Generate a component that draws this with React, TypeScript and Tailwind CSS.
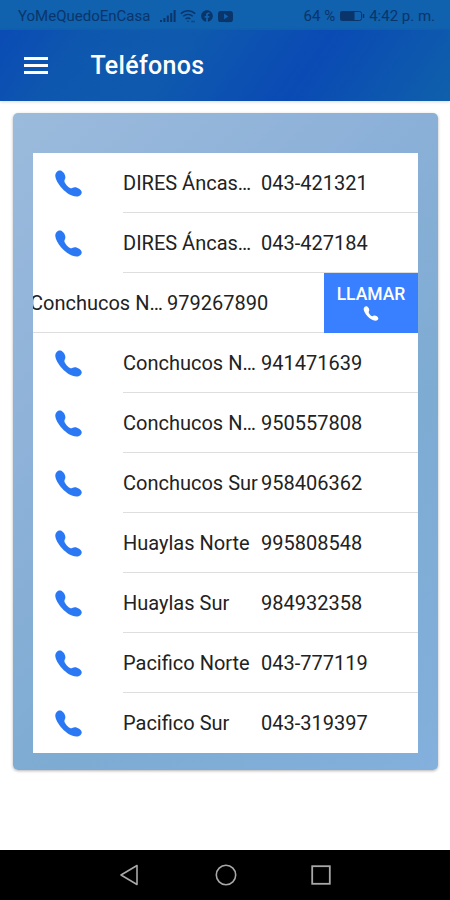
import { FaFacebook } from "react-icons/fa";
import { IoLogoYoutube } from "react-icons/io5";

type Contact = { name: string; phone: string; open?: boolean };

// Long names are already shortened to fit the name column
const contacts: Contact[] = [
    { name: "DIRES Áncas…", phone: "043-421321" },
    { name: "DIRES Áncas…", phone: "043-427184" },
    { name: "Conchucos N…", phone: "979267890", open: true },
    { name: "Conchucos N…", phone: "941471639" },
    { name: "Conchucos N…", phone: "950557808" },
    { name: "Conchucos Sur", phone: "958406362" },
    { name: "Huaylas Norte", phone: "995808548" },
    { name: "Huaylas Sur", phone: "984932358" },
    { name: "Pacifico Norte", phone: "043-777119" },
    { name: "Pacifico Sur", phone: "043-319397" },
];

function CallIcon({ className }: { className: string }) {
    return (
        <svg viewBox="0 0 27 27" className={className} fill="currentColor">
            <path d="M5.5.5C2.5 0 .2 2.8.3 6 .7 12.5 11.5 26.2 21.5 26.6c3 0 5.4-2.1 5.2-4.6-.2-2.2-4.7-4.9-6.9-4.7-1.8.2-3 1.3-4.3 1-2.2-.6-5.7-4.7-6.1-6.7-.3-1.4 1-2.4 1-4.3C10.400 4.500 8 1 5.500.5Z" />
        </svg>
    );
}

function StatusBar() {
    return (
        <div className="flex h-[30px] items-center justify-between bg-[#1061ae] pt-0.5 pr-[15px] pl-[18px] text-[15px] text-[#0a356a]">
            <div className="flex items-center">
                <span className="w-[133px] whitespace-nowrap">YoMeQuedoEnCasa</span>
                {/* Signal */}
                <svg viewBox="0 0 16 14" className="ml-[9px] h-3.5 w-4" fill="currentColor">
                    <rect x="0" y="11" width="2" height="2" />
                    <rect x="3.4" y="9" width="2" height="4" />
                    <rect x="6.8" y="6.5" width="2" height="6.5" />
                    <rect x="10.2" y="4" width="2" height="9" />
                    <rect x="13.6" y="1" width="2" height="12" />
                </svg>
                {/* Wifi */}
                <svg viewBox="0 0 16 14" className="ml-1 h-3.5 w-4" fill="none" stroke="currentColor" strokeWidth="1.5">
                    <path d="M0.8 4.6C5 0.8 11 0.8 15.2 4.6M3.2 7.3C6 4.9 10 4.9 12.8 7.3M5.6 10C7 8.8 9 8.8 10.4 10" />
                    <circle cx="8" cy="12.2" r="0.8" fill="currentColor" stroke="none" />
                    <path d="M11.5 12.5h3" strokeDasharray="1.2 0.8" />
                </svg>
                <FaFacebook className="ml-[5px] h-3 w-3" />
                <IoLogoYoutube className="ml-[5px] h-[15px] w-[15px]" />
            </div>
            <div className="flex items-center">
                <span className="whitespace-nowrap">64 %</span>
                {/* Battery */}
                <svg viewBox="0 0 25 12" className="mr-1 ml-[5px] h-3 w-[25px]" fill="none" stroke="currentColor">
                    <rect x="0.5" y="1.5" width="21" height="9" rx="2" />
                    <rect x="1" y="2" width="13" height="8" fill="currentColor" />
                    <path d="M23.5 4v4" strokeWidth="1.5" />
                </svg>
                <span className="whitespace-nowrap">4:42 p. m.</span>
            </div>
        </div>
    );
}

function Row({ contact, last }: { contact: Contact; last: boolean }) {
    if (contact.open) {
        return (
            <div className="flex h-[60px]">
                <div className="flex min-w-0 flex-1 items-center overflow-hidden border-b border-[#dedede] whitespace-nowrap">
                    <span className="-ml-[3px] w-[137px] shrink-0">{contact.name}</span>
                    <span>{contact.phone}</span>
                </div>
                <button className="flex w-[94px] flex-col items-center justify-center bg-[#3880ff] pb-[3px] text-white">
                    <span className="text-[17.5px] leading-[24px] font-medium">LLAMAR</span>
                    <CallIcon className="h-[15px] w-4" />
                </button>
            </div>
        );
    }

    return (
        <div className="flex h-[60px] items-center">
            <div className="w-[90px] shrink-0 pl-[22px]">
                <CallIcon className="h-[27px] w-[27px] text-[#2b78f5]" />
            </div>
            <div className={`flex h-full flex-1 items-center whitespace-nowrap ${last ? "" : "border-b border-[#dedede]"}`}>
                <span className="w-[138px] shrink-0">{contact.name}</span>
                <span>{contact.phone}</span>
            </div>
        </div>
    );
}

export default function App() {
    return (
        <div className="flex h-[900px] w-[450px] flex-col overflow-hidden bg-white font-[Roboto,sans-serif]">
            <StatusBar />

            {/* Toolbar */}
            <header className="flex h-[71px] items-center bg-[linear-gradient(125deg,#0a4bb5_0%,#0e57ae_18%,#0f5aae_38%,#0a4ab4_67%,#0f60ab_100%)] text-white shadow-[0_1px_3px_rgba(0,0,0,0.15)]">
                <svg viewBox="0 0 24 17" className="ml-[23.5px] h-[17px] w-6" stroke="currentColor" strokeWidth="2.8">
                    <path d="M0 1.5h24M0 8.5h24M0 15.5h24" />
                </svg>
                <h1 className="ml-[43px] pt-px text-[25px] font-medium tracking-[0.3px]">Teléfonos</h1>
            </header>

            {/* Phone list */}
            <main className="flex-1 pt-3 pr-3 pl-[13px]">
                <div className="h-[657px] rounded-[5px] bg-[linear-gradient(135deg,#9bbbdc_0%,#8fb2d9_30%,#7dabd2_65%,#83b0dc_100%)] px-5 pt-10 shadow-[0_1px_3px_rgba(0,0,0,0.3)]">
                    <div className="w-[385px] bg-white text-[20px] text-[#222]">
                        {contacts.map((contact, i) => (
                            <Row key={contact.phone} contact={contact} last={i === contacts.length - 1} />
                        ))}
                    </div>
                </div>
            </main>

            {/* Android navigation */}
            <nav className="flex h-[50px] items-center bg-black text-[#a8a8a8]">
                <svg viewBox="0 0 20 22" className="ml-[119px] h-[22px] w-5" fill="none" stroke="currentColor" strokeWidth="1.6" strokeLinejoin="round">
                    <path d="M18 1.5v19L2 11Z" />
                </svg>
                <svg viewBox="0 0 22 22" className="ml-[75.5px] h-[22px] w-[22px]" fill="none" stroke="currentColor" strokeWidth="1.6">
                    <circle cx="11" cy="11" r="9.7" />
                </svg>
                <svg viewBox="0 0 20 20" className="ml-[74.5px] h-5 w-5" fill="none" stroke="currentColor" strokeWidth="1.8">
                    <rect x="1.2" y="1.2" width="17.6" height="17.6" />
                </svg>
            </nav>
        </div>
    );
}
